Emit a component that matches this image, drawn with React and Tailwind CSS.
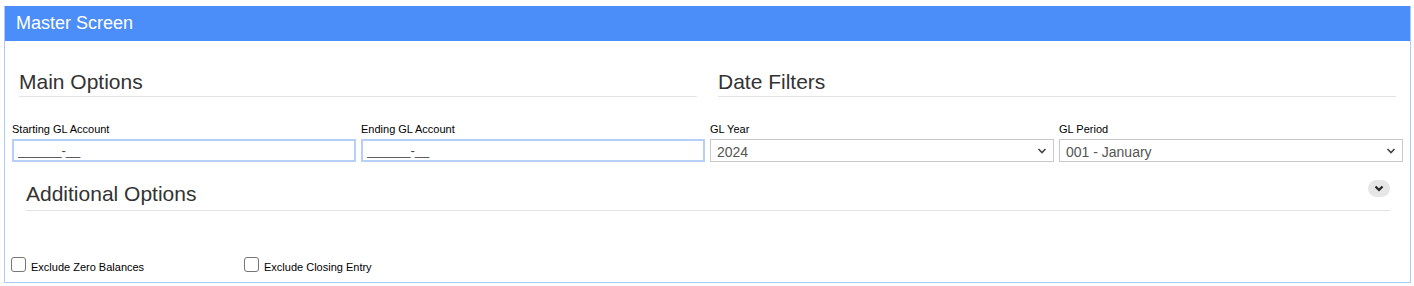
import { useState } from 'react'

const font = { fontFamily: '"Liberation Sans", Arial, sans-serif' }

function SectionTitle({ children }) {
  return (
    <div className="border-b border-[#e3e3e3] pb-[2px]">
      <h2 className="text-[21px] leading-[24px] text-[#333]">{children}</h2>
    </div>
  )
}

function MaskInput({ label }) {
  return (
    <div className="flex flex-col">
      <label className="text-[11px] leading-[13px] text-black mb-[3px]">{label}</label>
      <input
        defaultValue="______-__"
        className="h-[23px] w-full border-2 border-[#b7cff5] px-[4px] text-[13px] text-[#444] outline-none"
      />
    </div>
  )
}

function SelectBox({ label, options }) {
  return (
    <div className="flex flex-col">
      <label className="text-[11px] leading-[13px] text-black mb-[3px]">{label}</label>
      <div className="relative h-[23px] border border-[#c9c9c9] bg-white">
        <select className="h-full w-full appearance-none bg-transparent pl-[6px] text-[14px] text-[#555] outline-none">
          {options.map((o) => (
            <option key={o}>{o}</option>
          ))}
        </select>
        <svg className="pointer-events-none absolute right-[6px] top-[7px] w-[10px] h-[8px]" viewBox="0 0 10 8">
          <path d="M1.5 2 L5 5.5 L8.5 2" fill="none" stroke="#444" strokeWidth="1.6" />
        </svg>
      </div>
    </div>
  )
}

function Check({ label }) {
  const [on, setOn] = useState(false)
  return (
    <label className="w-[233px] flex items-end gap-[5px] cursor-pointer" onClick={() => setOn(!on)}>
      <span className="w-[15px] h-[15px] rounded-[3px] border border-[#767676] bg-white flex items-center justify-center">
        {on && <span className="text-[11px] leading-none">✓</span>}
      </span>
      <span className="text-[11px] leading-[13px] text-black -mb-[2px]">{label}</span>
    </label>
  )
}

export default function App() {
  return (
    <div className="bg-white w-[1414px] h-[286px] pt-[6px] pl-[4px]" style={font}>
      <div className="w-[1407px] border border-t-0 border-[#aecaf6] bg-white">
        {/* header */}
        <div className="h-[35px] bg-[#4b8ef9] flex items-center px-[11px] text-white text-[18px]">
          Master Screen
        </div>

        {/* section titles */}
        <div className="grid grid-cols-2 gap-[21px] px-[14px] pt-[29px]">
          <SectionTitle>Main Options</SectionTitle>
          <SectionTitle>Date Filters</SectionTitle>
        </div>

        {/* fields */}
        <div className="grid grid-cols-4 gap-[5px] px-[7px] pt-[26px]">
          <MaskInput label="Starting GL Account" />
          <MaskInput label="Ending GL Account" />
          <SelectBox label="GL Year" options={['2024', '2023', '2022']} />
          <SelectBox label="GL Period" options={['001 - January', '002 - February', '003 - March']} />
        </div>

        {/* additional options */}
        <div className="px-[21px] pr-[20px] pt-[18px]">
          <div className="flex items-end justify-between border-b border-[#e3e3e3] pb-[4px]">
            <h2 className="text-[21px] leading-[24px] text-[#333]">Additional Options</h2>
            <button className="mb-[9px] w-[22px] h-[17px] rounded-full bg-[#e6e6e6] flex items-center justify-center">
              <svg className="w-[10px] h-[7px]" viewBox="0 0 10 7">
                <path d="M1.5 1.5 L5 5 L8.5 1.5" fill="none" stroke="#222" strokeWidth="2.2" />
              </svg>
            </button>
          </div>
        </div>

        <div className="flex px-[6px] pt-[46px] pb-[10px]">
          <Check label="Exclude Zero Balances" />
          <Check label="Exclude Closing Entry" />
        </div>
      </div>
    </div>
  )
}
